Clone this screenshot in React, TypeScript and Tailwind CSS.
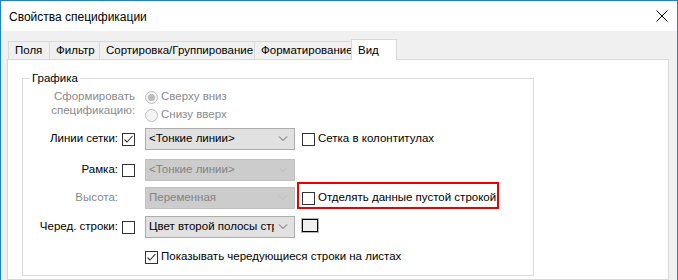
import React from "react";

const font = { fontFamily: '"Liberation Sans", Arial, sans-serif' };

function Check({ checked = false }: { checked?: boolean }) {
  return (
    <div className="w-[13px] h-[13px] border border-[#333333] bg-white flex items-center justify-center shrink-0">
      {checked && (
        <svg width="11" height="11" viewBox="0 0 11 11">
          <path d="M1.5 5.5 L4 8 L9.5 2" fill="none" stroke="#333333" strokeWidth="1.1" />
        </svg>
      )}
    </div>
  );
}

function Radio({ on = false }: { on?: boolean }) {
  return (
    <div className="w-[13px] h-[13px] rounded-full border border-[#bcbcbc] bg-[#f4f4f4] flex items-center justify-center shrink-0">
      {on && <div className="w-[7px] h-[7px] rounded-full bg-[#bcbcbc]" />}
    </div>
  );
}

function Chevron({ color }: { color: string }) {
  return (
    <svg width="10" height="6" viewBox="0 0 10 6" className="shrink-0">
      <path d="M1 0.5 L5 4.5 L9 0.5" fill="none" stroke={color} strokeWidth="1" />
    </svg>
  );
}

function Select({ text, disabled = false }: { text: string; disabled?: boolean }) {
  return (
    <div
      className={
        "w-[150px] h-[22px] border flex items-center pl-[3px] pr-[6px] " +
        (disabled ? "bg-[#cccccc] border-[#bfbfbf] text-[#838383]" : "bg-[#e1e1e1] border-[#adadad] text-black")
      }
    >
      <div className="flex-1 overflow-hidden whitespace-nowrap">{text}</div>
      <div className="w-[14px] flex justify-end">
        <Chevron color={disabled ? "#bdbdbd" : "#606060"} />
      </div>
    </div>
  );
}

function LabelCell({ label, disabled = false, box }: { label: string; disabled?: boolean; box?: React.ReactNode }) {
  return (
    <div className="w-[112px] flex items-center justify-end gap-[4px]">
      <span className={"whitespace-nowrap " + (disabled ? "text-[#8a8a8a]" : "text-black")}>{label}</span>
      {box ?? <div className="w-[13px]" />}
    </div>
  );
}

export default function App() {
  const tabs = [
    { t: "Поля", w: 42 },
    { t: "Фильтр", w: 50 },
    { t: "Сортировка/Группирование", w: 155 },
    { t: "Форматирование", w: 97 },
  ];
  return (
    <div
      className="w-[678px] h-[280px] overflow-hidden border-l border-r border-t border-[#1883d7] bg-[#f0f0f0] text-[11.5px] text-black flex flex-col"
      style={font}
    >
      <div className="h-[30px] bg-white flex items-center pl-[8px] pr-[8px] shrink-0">
        <div className="flex-1 text-[12px] pt-[1px]">Свойства спецификации</div>
        <svg width="12" height="12" viewBox="0 0 12 12" className="mr-[1px]">
          <path d="M0.5 0.5 L11.5 11.5 M11.5 0.5 L0.5 11.5" stroke="#000" strokeWidth="1" />
        </svg>
      </div>
      <div className="flex-1 flex flex-col pl-[6px] pr-[8px] pt-[7px]">
        <div className="flex items-end h-[21px] ml-[1px] relative z-10">
          {tabs.map((tb, i) => (
            <div
              key={tb.t}
              className={
                "h-[18px] border-t border-[#d9d9d9] flex items-center pl-[6px] bg-[#f0f0f0] whitespace-nowrap overflow-hidden " +
                (i === 0 ? "border-l " : "") +
                "border-r"
              }
              style={{ width: tb.w }}
            >
              {tb.t}
            </div>
          ))}
          <div className="h-[21px] w-[46px] bg-white border-t border-l border-r border-[#d9d9d9] -ml-[1px] flex items-start pl-[6px] pt-[2px] -mb-[1px]">
            Вид
          </div>
        </div>
        <div className="flex-1 bg-white border border-[#d9d9d9] pl-[14px] pt-[18px]">
          <div className="w-[512px] h-[198px] border border-[#dcdcdc] relative">
            <span className="absolute -top-[8px] left-[7px] bg-white px-[2px] leading-[14px]">Графика</span>
            <div className="flex flex-col pt-[9px]">
              <div className="flex">
                <div className="w-[112px] text-right text-[#8a8a8a] leading-[14px] pt-[1px]">
                  Сформировать
                  <br />
                  спецификацию:
                </div>
                <div className="ml-[10px] flex flex-col">
                  <div className="h-[18px] flex items-center gap-[3px] text-[#8a8a8a]">
                    <Radio on />
                    <span>Сверху вниз</span>
                  </div>
                  <div className="h-[18px] flex items-center gap-[3px] text-[#8a8a8a]">
                    <Radio />
                    <span>Снизу вверх</span>
                  </div>
                </div>
              </div>
              <div className="flex h-[22px] mt-[4px]">
                <LabelCell label="Линии сетки:" box={<Check checked />} />
                <div className="ml-[10px]">
                  <Select text="<Тонкие линии>" />
                </div>
                <div className="ml-[7px] flex items-center gap-[3px]">
                  <Check />
                  <span>Сетка в колонтитулах</span>
                </div>
              </div>
              <div className="flex h-[22px] mt-[9px]">
                <LabelCell label="Рамка:" box={<Check />} />
                <div className="ml-[10px]">
                  <Select text="<Тонкие линии>" disabled />
                </div>
              </div>
              <div className="flex h-[22px] mt-[6px]">
                <LabelCell label="Высота:" disabled />
                <div className="ml-[10px]">
                  <Select text="Переменная" disabled />
                </div>
                <div className="ml-[7px] flex items-center gap-[3px] relative">
                  <div className="absolute -left-[5px] -top-[5px] w-[202px] h-[27px] border-2 border-[#ee0000]" />
                  <Check />
                  <span className="whitespace-nowrap">Отделять данные пустой строкой</span>
                </div>
              </div>
              <div className="flex h-[22px] mt-[7px]">
                <LabelCell label="Черед. строки:" box={<Check />} />
                <div className="ml-[10px]">
                  <Select text="Цвет второй полосы строк" />
                </div>
                <div className="ml-[6px] pt-[2px]">
                  <div className="w-[18px] h-[15px] border border-[#b4b4b4] p-0">
                    <div className="w-full h-full border border-black bg-[#f0f0f0]" />
                  </div>
                </div>
              </div>
              <div className="flex h-[18px] mt-[10px]">
                <div className="w-[112px]" />
                <div className="ml-[10px] flex items-center gap-[3px]">
                  <Check checked />
                  <span>Показывать чередующиеся строки на листах</span>
                </div>
              </div>
            </div>
          </div>
        </div>
      </div>
    </div>
  );
}
